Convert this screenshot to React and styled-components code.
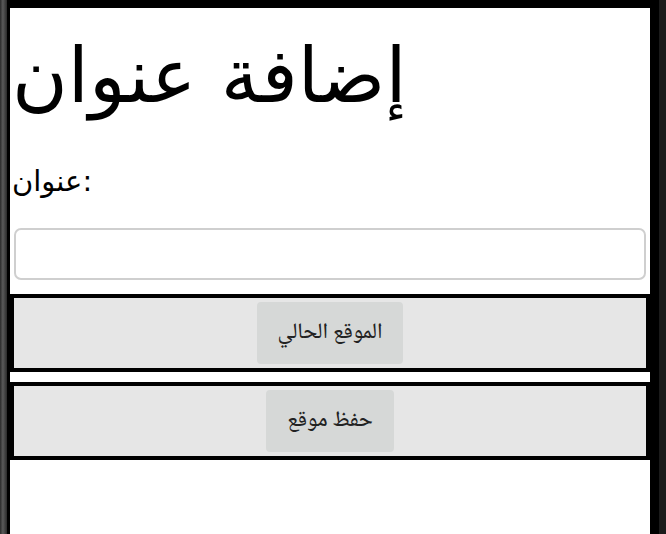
import React from "react";
import styled, { createGlobalStyle } from "styled-components";

const GlobalStyle = createGlobalStyle`
  html, body {
    margin: 0;
    padding: 0;
    background: #000;
    height: 100%;
  }
  #root {
    height: 100%;
  }
`;

export default function App() {
  return (
    <>
      <GlobalStyle />
      <Frame>
        <EdgeLeft />
        <Page>
          <Title>إضافة عنوان</Title>
          <Label htmlFor="address">عنوان:</Label>
          <TextInput id="address" type="text" />
          <ButtonBar>
            <ActionButton>الموقع الحالي</ActionButton>
          </ButtonBar>
          <ButtonBar>
            <ActionButton>حفظ موقع</ActionButton>
          </ButtonBar>
        </Page>
        <EdgeRight />
      </Frame>
    </>
  );
}

const Frame = styled.div`
  display: flex;
  min-height: 100%;
  background: #000;
`;

const EdgeLeft = styled.div`
  width: 7px;
  margin-right: 3px;
  background: linear-gradient(to right, #2a2a2a, #5a5a5a 40%, #2b2b2b);
`;

const EdgeRight = styled.div`
  width: 7px;
  margin-left: 9px;
  background: #1b1b1b;
`;

const Page = styled.div`
  width: 640px;
  margin-top: 8px;
  background: #fff;
  display: flex;
  flex-direction: column;
  font-family: "DejaVu Sans", sans-serif;
  color: #000;
`;

const Title = styled.h1`
  margin: 19px 0 38px 2px;
  font-size: 76px;
  font-weight: normal;
  line-height: 1.3;
`;

const Label = styled.label`
  margin-left: 2px;
  font-size: 29px;
  line-height: 1.2;
`;

const TextInput = styled.input`
  margin: 29px 4px 14px 4px;
  height: 52px;
  box-sizing: border-box;
  border: 2px solid #cfcfcf;
  border-radius: 7px;
  background: #fff;
  outline: none;
`;

const ButtonBar = styled.div`
  display: flex;
  justify-content: center;
  align-items: center;
  height: 78px;
  box-sizing: border-box;
  border: 4px solid #000;
  background: #e6e6e6;
  & + & {
    margin-top: 10px;
  }
`;

const ActionButton = styled.button`
  height: 62px;
  padding: 0 21px;
  border: none;
  border-radius: 4px;
  background: #d6d8d7;
  color: #222;
  font-family: "Noto Naskh Arabic", "Noto Sans", "DejaVu Sans", serif;
  font-size: 22px;
  font-weight: 500;
`;
